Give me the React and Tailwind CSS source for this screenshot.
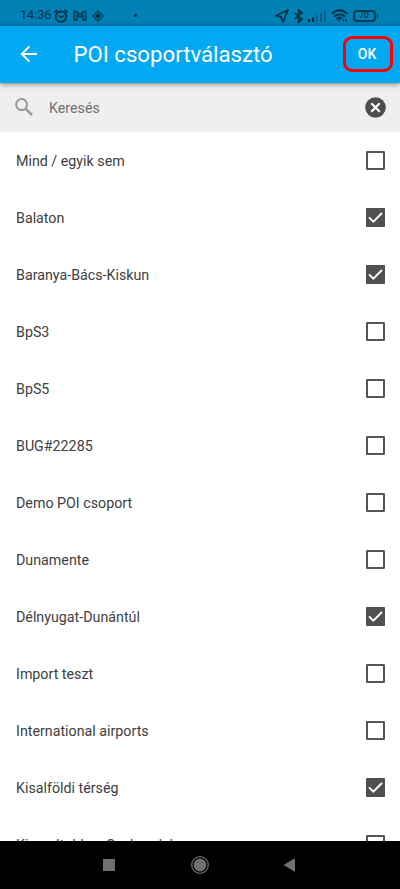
import React, { useState } from 'react';

const groups = [
  { name: 'Mind / egyik sem', checked: false },
  { name: 'Balaton', checked: true },
  { name: 'Baranya-Bács-Kiskun', checked: true },
  { name: 'BpS3', checked: false },
  { name: 'BpS5', checked: false },
  { name: 'BUG#22285', checked: false },
  { name: 'Demo POI csoport', checked: false },
  { name: 'Dunamente', checked: false },
  { name: 'Délnyugat-Dunántúl', checked: true },
  { name: 'Import teszt', checked: false },
  { name: 'International airports', checked: false },
  { name: 'Kisalföldi térség', checked: true },
  { name: 'Kiemelt dd un Szobrunk l', checked: false },
];

function StatusBar() {
  return (
    <div className="flex h-[26px] shrink-0 items-center bg-[#0080b5] pt-[5px] pl-5 pr-[22px] text-[#053042]">
      <span className="w-[32px] text-[12.8px] leading-none tracking-[-0.1px]">14:36</span>
      {/* alarm */}
      <svg className="ml-[2px] h-[14px] w-[14px]" viewBox="0 0 14 14" fill="none" stroke="currentColor">
        <circle cx="7" cy="7.6" r="5.3" strokeWidth="1.8" />
        <path d="M0.5 3.3L3.3 0.9M13.5 3.3L10.7 0.9" strokeWidth="1.7" />
        <path d="M4.4 6.5L7 8.7L9.6 6.5" strokeWidth="1.4" />
      </svg>
      {/* mail */}
      <svg className="ml-[5px] h-[11px] w-[14px]" viewBox="0 0 14 11" fill="none" stroke="currentColor" strokeWidth="1.3">
        <path d="M1.2 10V2.2Q1.2 0.5 3 1.4L7 4.6L11 1.4Q12.8 0.5 12.8 2.2V10H10V5L7 7.3L4 5V10Z" />
      </svg>
      {/* location */}
      <svg className="ml-[5px] h-3 w-3" viewBox="0 0 12 12" fill="none" stroke="currentColor">
        <circle cx="6" cy="6" r="4" strokeWidth="1" />
        <circle cx="6" cy="6" r="2.3" fill="currentColor" stroke="none" />
        <path d="M6 0.2V2M6 10V11.8M0.2 6H2M10 6H11.8" strokeWidth="1.2" />
      </svg>
      <span className="ml-[30px] h-[3px] w-[3px] rounded-full bg-[#053042]" />

      <div className="ml-auto flex items-center">
        <svg className="h-[14px] w-[14px]" viewBox="0 0 14 14" fill="none" stroke="currentColor" strokeWidth="1.6" strokeLinejoin="round">
          <path d="M13 1L0.9 6.7L6 7.9L8 13Z" />
        </svg>
        <svg className="ml-[5px] h-[14px] w-[9px]" viewBox="0 0 9 14" fill="none" stroke="currentColor" strokeWidth="1.6">
          <path d="M0.6 4L8 10.2L4.6 13V1L8 3.8L0.6 10" />
        </svg>
        <svg className="ml-[5px] h-3 w-[18px]" viewBox="0 0 18 12" fill="currentColor">
          <rect x="0" y="9" width="2.2" height="3" />
          <rect x="4" y="7.2" width="2.2" height="4.8" />
          <rect x="8" y="4.8" width="2" height="7.2" opacity="0.4" />
          <rect x="12" y="2.4" width="2" height="9.6" opacity="0.4" />
          <rect x="16" y="0" width="2" height="12" opacity="0.4" />
        </svg>
        <svg className="ml-[5px] h-[13px] w-[17px]" viewBox="0 0 17 13" fill="none" stroke="currentColor" strokeWidth="2">
          <path d="M0.8 4.8Q8.5 -2.2 16.2 4.8M3.2 7.6Q8.5 2.8 13.8 7.6M5.6 10Q8.5 7.4 11 9.6" />
          <path d="M6.8 10.6H10L8.4 12.4Z" fill="currentColor" stroke="none" />
          <path d="M12.6 9.7V12.7M15.1 9.7V12.7" strokeWidth="1.2" />
        </svg>
        <div className="ml-[5px] flex h-3 w-[23px] items-center justify-center rounded-[4px] border-2 border-[#053042]/85 text-[8.5px] font-medium leading-none">
          70
        </div>
        <span className="ml-px h-1 w-[1.5px] bg-[#053042]" />
      </div>
    </div>
  );
}

function Header() {
  return (
    <div className="relative z-10 flex h-[56.5px] shrink-0 items-center bg-[#02a9f2] pb-[1px] pl-5 pr-[7px] text-white shadow-[0_1px_5px_rgba(0,0,0,0.5)]">
      <svg className="h-[18px] w-[18px]" viewBox="0 0 18 18" fill="none" stroke="currentColor" strokeWidth="1.9">
        <path d="M17 9H2M9.4 1.4L1.8 9L9.4 16.6" />
      </svg>
      <h1 className="ml-[35.5px] whitespace-nowrap text-[22.2px] leading-none">POI csoportválasztó</h1>
      <button className="ml-auto h-[36px] w-[50px] rounded-[9px] border-[3.5px] border-[#fb0007] pr-[2px] text-[14px] font-medium leading-none">
        OK
      </button>
    </div>
  );
}

function SearchBar() {
  return (
    <div className="flex h-[49px] shrink-0 items-center bg-[#efefef] pl-[15px] pr-[14px]">
      <svg className="h-[18px] w-[18px]" viewBox="0 0 18 18" fill="none" stroke="#989ca0" strokeWidth="2">
        <circle cx="6.6" cy="6.6" r="5.5" />
        <path d="M10.8 10.8L17 17" strokeWidth="2.5" />
      </svg>
      <span className="ml-4 pt-[2px] text-[14.25px] leading-none text-[#707070]">Keresés</span>
      <svg className="ml-auto h-[21px] w-[21px]" viewBox="0 0 21 21">
        <circle cx="10.5" cy="10.5" r="10.3" fill="#4d4d4d" />
        <path d="M6.3 6.3L14.7 14.7M14.7 6.3L6.3 14.7" stroke="#fff" strokeWidth="2.2" />
      </svg>
    </div>
  );
}

function GroupRow({ group, onToggle }) {
  return (
    <div onClick={onToggle} className="flex h-[57.05px] shrink-0 items-center justify-between pl-4 pr-[15px]">
      <span className="whitespace-nowrap pt-[2px] text-[14.25px] leading-none text-[#404040]">{group.name}</span>
      <svg className="h-[19px] w-[19px]" viewBox="0 0 19 19" fill="none">
        {group.checked ? (
          <>
            <rect width="19" height="19" rx="0.8" fill="#505050" />
            <path d="M3 9.3L7.4 13.7L16 5" stroke="#fff" strokeWidth="1.9" />
          </>
        ) : (
          <rect x="1" y="1" width="17" height="17" rx="0.3" stroke="#555" strokeWidth="2" />
        )}
      </svg>
    </div>
  );
}

function NavBar() {
  return (
    <div className="flex h-[48px] shrink-0 items-center bg-black pl-[103px] text-[#707070]">
      <span className="h-3 w-3 bg-[#707070]" />
      <svg className="ml-[76px] h-[18px] w-[18px]" viewBox="0 0 18 18">
        <circle cx="9" cy="9" r="8.3" fill="none" stroke="currentColor" strokeWidth="1.2" />
        <circle cx="9" cy="9" r="6.4" fill="currentColor" />
      </svg>
      <svg className="ml-[74px] h-[14px] w-3" viewBox="0 0 12 14" fill="currentColor">
        <path d="M0.5 7L12 0.2V13.8Z" />
      </svg>
    </div>
  );
}

export default function App() {
  const [items, setItems] = useState(groups);

  const toggle = (index) => {
    setItems((prev) => prev.map((g, i) => (i === index ? { ...g, checked: !g.checked } : g)));
  };

  return (
    <div className="flex h-[889px] w-[400px] flex-col overflow-hidden bg-white font-['Roboto',sans-serif]">
      <StatusBar />
      <Header />
      <SearchBar />
      <div className="flex min-h-0 flex-1 flex-col overflow-hidden">
        {items.map((group, i) => (
          <GroupRow key={group.name} group={group} onToggle={() => toggle(i)} />
        ))}
      </div>
      <NavBar />
    </div>
  );
}
